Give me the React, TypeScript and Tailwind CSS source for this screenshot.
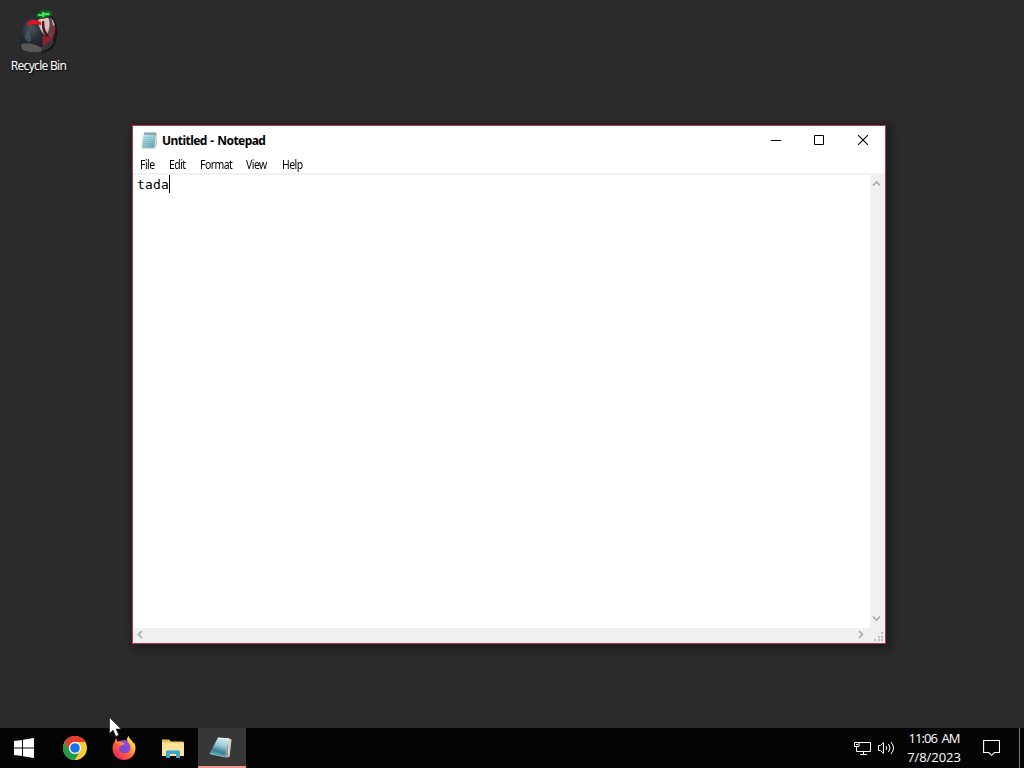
const MENU_ITEMS = [
  { title: 'File', className: 'w-[29px]' },
  { title: 'Edit', className: 'w-[31px]' },
  { title: 'Format', className: 'w-[46px]' },
  { title: 'View', className: 'w-[36px]' },
  { title: 'Help', className: 'w-[36px]' },
];

function RecycleBinIcon() {
  return (
    <svg width="40" height="46" viewBox="0 0 38 46" preserveAspectRatio="none">
      <defs>
        <radialGradient id="bin-shell" cx=".3" cy=".42" r=".8">
          <stop offset="0" stopColor="#4b565e" />
          <stop offset=".35" stopColor="#252d33" />
          <stop offset="1" stopColor="#0d1114" />
        </radialGradient>
        <linearGradient id="bin-light" x1="0" y1="0" x2="1" y2="1">
          <stop offset="0" stopColor="#efb7bf" />
          <stop offset=".5" stopColor="#dcc0c6" />
          <stop offset="1" stopColor="#5f4449" />
        </linearGradient>
        <filter id="bin-soft" x="-20%" y="-20%" width="140%" height="140%">
          <feGaussianBlur stdDeviation=".55" />
        </filter>
      </defs>
      <g filter="url(#bin-soft)">
        <path d="M16 4C9 8 2 17 1 30c0 6 1 10 4 12 8 4 21 4 26-1 4-5 6-14 5-22C35 11 30 5 22 3z" fill="url(#bin-shell)" />
        <path d="M18 12c5-3 12-3 14 0 4 7 3 15-3 19-6-4-10-9-11-19z" fill="url(#bin-light)" />
        <path d="M8 15c2-3 5-4 8-3l5 2v3l-7-1-6 2z" fill="#db1722" />
        <path d="M24 13c0 7 1 10 4 14l2 2-1 3c-5-4-8-10-7-19z" fill="#4a171d" />
        <path d="M30 9c4 9 2 15-1 20l-2-3c2-5 3-10 1-16z" fill="#5c3f46" />
        <path d="M34 17c1 10-2 17-8 23l-2-2c5-4 7-10 8-20z" fill="#852531" />
        <path d="M22 28l8 1-2 8-5 5z" fill="#8c202d" />
        <path d="M2 36c7-2 15 1 20 4l-1 4c-6 1-11 0-15-1-3-1-4-3-4-7" fill="#585858" />
        <path d="M8 22c3 3 4 8 3 12-3 0-5-2-6-5z" fill="#5d6b77" opacity=".5" />
        <path d="M22 38c5-2 9-5 10-9l1 6c-3 5-6 7-11 8z" fill="#343437" />
        <path d="M16 6l6-4 9 1 1 4-9 4-7-2z" fill="#145c20" />
        <path d="M18 7c4-1 8-1 11-1M23 4v5" stroke="#43e159" strokeWidth="2.3" />
      </g>
    </svg>
  );
}

function NotepadIcon() {
  return (
    <svg width="17" height="17" viewBox="0 0 17 17">
      <defs>
        <linearGradient id="pad-small" x1=".1" y1="0" x2=".8" y2="1">
          <stop offset="0" stopColor="#c5edf5" />
          <stop offset=".5" stopColor="#9bcfdb" />
          <stop offset="1" stopColor="#5da4b7" />
        </linearGradient>
      </defs>
      <path d="M3 1.5h13V13l-2 3.5H1z" fill="#b3b6ac" />
      <path d="M15 1.5l1 1-1 12-2 2z" fill="#e4dfc9" />
      <path d="M2.5 1.5h12.2l-1.4 14L.6 15z" fill="url(#pad-small)" />
      <path d="M3 5.5h10.5M2.6 7.5h10.5M2.3 9.5h10.5M2 11.5h10.5" stroke="#72aebb" strokeWidth=".5" />
      <path d="M4 .2V3M6 .2V3M8 .2V3M10 .2V3M12 .2V3M14 .2V3" stroke="#4c6970" strokeWidth=".9" />
    </svg>
  );
}

// the taskbar uses the wider, tilted notepad without rings
function NotepadTaskIcon() {
  return (
    <svg width="24" height="24" viewBox="0 0 24 24">
      <defs>
        <linearGradient id="pad-task" x1=".65" y1="0" x2=".35" y2="1">
          <stop offset="0" stopColor="#d7edf0" />
          <stop offset=".4" stopColor="#9bc9d4" />
          <stop offset=".7" stopColor="#3b7f94" />
          <stop offset="1" stopColor="#73b6c4" />
        </linearGradient>
      </defs>
      <path d="M18 3l4 1 .5 1-2 17-5 .5z" fill="#d4d1c5" />
      <path d="M9 2.5l11 .8-4 18.7-15.5-3.2z" fill="url(#pad-task)" />
      <path d="M9 3.3l11 .7" stroke="#e3eeec" />
      <path d="M19 8l-3 14 3-.5z" fill="#8d9796" />
      <path d="M1 18.7l14 3" stroke="#8fd3da" strokeWidth=".8" />
    </svg>
  );
}

function WindowsLogo() {
  return (
    <svg width="20" height="20" viewBox="0 0 20 20" fill="#fff">
      <path d="M0 3l8-1.1v7.6H0zM9 1.7L20 0v9.5H9zM0 10.5h8v7.6L0 17zM9 10.5h11V20L9 18.3z" />
    </svg>
  );
}

function ChromeIcon() {
  return (
    <svg width="24" height="24" viewBox="0 0 24 24">
      <circle cx="12" cy="12" r="12" fill="#fcc934" />
      <path d="M1.6 6A12 12 0 0 1 22.4 6H12a6 6 0 0 0-5.2 9z" fill="#e33b2e" />
      <path d="M1.6 6l5.2 9a6 6 0 0 0 10.4 0L12 24A12 12 0 0 1 1.6 6z" fill="#229b4b" />
      <path d="M17.2 15A6 6 0 0 0 17.2 9h-5L22.4 8A12 12 0 0 1 12 24z" fill="#fcc934" />
      <circle cx="12" cy="12" r="6" fill="#fff" />
      <circle cx="12" cy="12" r="4.8" fill="#1a73e8" />
    </svg>
  );
}

function FirefoxIcon() {
  return (
    <svg width="24" height="24" viewBox="0 0 24 24">
      <defs>
        <linearGradient id="fox-fire" x1=".9" y1=".05" x2=".15" y2=".9">
          <stop offset="0" stopColor="#fff44f" />
          <stop offset=".35" stopColor="#ffad35" />
          <stop offset=".62" stopColor="#ff603d" />
          <stop offset="1" stopColor="#e52462" />
        </linearGradient>
        <linearGradient id="fox-globe" x1="1" y1="0" x2="0" y2="1">
          <stop offset="0" stopColor="#a94ce8" />
          <stop offset="1" stopColor="#6543c5" />
        </linearGradient>
      </defs>
      <circle cx="12" cy="11.5" r="7.5" fill="url(#fox-globe)" />
      <path d="M2 7l2-5 1.5 3.5c1.5-.5 3-.3 4 .5l3 1.5c0 1-1.5 1.6-3 1.8-.5 1.2-2.5 1-2.5 3 0 3 3 5 6 5 4 0 6-3 5.5-7-.4-2.7-3-3.8-3.5-6.3-.3-1.7.7-3 1.7-4C17 3 20.5 4 21.3 7.5l.7-1c1 1.3 1.5 3.5 1.5 5.5 0 6.8-4.7 12-11.5 12S.5 18.8.5 12.5C.5 10.5 1 8.5 2 7z" fill="url(#fox-fire)" />
    </svg>
  );
}

function FolderIcon() {
  return (
    <svg width="22" height="19" viewBox="0 0 22 19">
      <path d="M0 .5h7l2 2h12.5V17H0z" fill="#edbd56" />
      <path d="M0 3.5h22V17H0z" fill="#ffe29a" />
      <path d="M4 19v-6.5l1.5-1.5h11l1.5 1.5V19h-4v-4H8v4z" fill="#43a5c3" />
      <path d="M5.2 11.5h11.6" stroke="#75c6d9" />
    </svg>
  );
}

function ScrollArrow({ d }: { d: string }) {
  return (
    <svg width="15" height="15" viewBox="0 0 15 15" fill="none" stroke="#a8a8a8" strokeWidth="1.6">
      <path d={d} />
    </svg>
  );
}

function Notepad() {
  return (
    <section className="absolute left-[132px] top-[125px] flex h-[519px] w-[754px] flex-col border border-[#b8354a] bg-white text-black shadow-[3px_3px_9px_3px_rgba(0,0,0,0.35)]">
      {/* TITLE BAR */}
      <header className="flex h-[28px] shrink-0 items-center pl-[8px]">
        <NotepadIcon />
        <h1 className="ml-[4px] whitespace-nowrap pt-px text-[12px] font-bold tracking-[-0.55px] [word-spacing:1px]">Untitled - Notepad</h1>
        <div className="ml-auto flex h-full shrink-0 pr-px">
          <button type="button" aria-label="Minimize" className="flex w-[43px] items-center justify-center">
            <svg width="10" height="10"><path d="M0 5.5h10" stroke="#000" /></svg>
          </button>
          <button type="button" aria-label="Maximize" className="flex w-[44px] items-center justify-center">
            <svg width="10" height="10"><path d="M.5.5h9v9h-9z" fill="none" stroke="#000" /></svg>
          </button>
          <button type="button" aria-label="Close" className="flex w-[43px] items-center justify-center">
            <svg width="10" height="10"><path d="M0 0l10 10M10 0L0 10" stroke="#000" strokeWidth="1.1" /></svg>
          </button>
        </div>
      </header>

      {/* MENU */}
      <nav className="flex h-[21px] shrink-0 items-center border-b-2 border-[#f1f1f1] pl-[7px] pt-[2px]">
        {MENU_ITEMS.map((item) => (
          <button key={item.title} type="button" className={`${item.className} whitespace-nowrap text-left text-[12px] leading-[18px] tracking-[-0.6px]`}>
            <span className="inline-block origin-left scale-x-[0.87]">{item.title}</span>
          </button>
        ))}
      </nav>

      {/* DOCUMENT */}
      <div className="flex min-h-0 flex-1">
        <div className="flex flex-1 pl-[4px] font-['DejaVu_Sans_Mono',monospace] text-[13px] leading-[20px]">
          <span className="tracking-[0.17px]">tada</span>
          <span className="h-[18px] w-px bg-black" />
        </div>
        <div className="flex w-[15px] flex-col justify-between bg-[#f0f0f0] pb-[2px] pt-px">
          <ScrollArrow d="M3 9.5l3.5-3.5 3.5 3.5" />
          <ScrollArrow d="M3 5.5l3.5 3.5 3.5-3.5" />
        </div>
      </div>
      <div className="flex h-[15px] shrink-0 items-start bg-[#f0f0f0]">
        <ScrollArrow d="M9 3l-3.5 3.5L9 10" />
        <div className="ml-auto">
          <ScrollArrow d="M4 3l3.5 3.5L4 10" />
        </div>
        <svg width="15" height="15" viewBox="0 0 15 15" fill="#bcbcbc">
          <path d="M11 4h2v2h-2zM8 8h2v2H8zM11 8h2v2h-2zM4 11h2v2H4zM8 11h2v2H8zM11 11h2v2h-2z" />
        </svg>
      </div>
    </section>
  );
}

function Taskbar() {
  return (
    <footer className="flex h-10 shrink-0 items-center bg-[#050505] text-white">
      <button type="button" aria-label="Start" className="flex w-[48px] justify-center"><WindowsLogo /></button>
      <button type="button" aria-label="Chrome" className="ml-[2px] flex w-[49px] justify-center"><ChromeIcon /></button>
      <button type="button" aria-label="Firefox" className="flex w-[49px] justify-center"><FirefoxIcon /></button>
      <button type="button" aria-label="Files" className="flex w-[50px] justify-center"><FolderIcon /></button>
      <button type="button" aria-label="Notepad" className="flex h-10 w-[48px] items-center justify-center border-b-2 border-[#ee9790] bg-[#373737] pr-[2px]"><NotepadTaskIcon /></button>

      {/* TRAY */}
      <div className="ml-auto flex h-full items-center">
        <svg width="17" height="15" viewBox="0 0 17 15" fill="none" stroke="#fff">
          <path d="M5 1.5h11.5v9h-14V5.5M.5 1.5H5v4H.5zM9.5 11v2.5M6 13.5h7" />
          <path d="M2 3h2v1H2z" fill="#fff" stroke="none" />
        </svg>
        <svg width="17" height="14" viewBox="0 0 17 14" fill="none" stroke="#fff" className="ml-[7px]">
          <path d="M.5 4.5h2l3-3v11l-3-3h-2z" />
          <path d="M8 5q1.5 2 0 4M10.5 3q3 4 0 8M13 1q5 6 0 12" />
        </svg>
        <time className="ml-[12px] flex w-[54px] flex-col items-center whitespace-nowrap pb-px font-['Open_Sans',sans-serif] text-[13px] font-medium leading-[19px]">
          <span className="tracking-[-0.95px] [word-spacing:2px]">11:06 AM</span>
          <span className="tracking-[-0.05px]">7/8/2023</span>
        </time>
        <svg width="17" height="17" viewBox="0 0 17 17" fill="none" stroke="#fff" strokeWidth="1.1" className="ml-[22px]">
          <path d="M.6.5h15.9v12h-5.1l-2.8 2.8-2.8-2.8H.6z" />
        </svg>
        <div className="ml-[19px] h-full w-[5px] border-l border-[#777]" />
      </div>
    </footer>
  );
}

export default function App() {
  return (
    <main className="relative flex h-[768px] w-[1024px] flex-col overflow-hidden bg-[#2b2b2b] font-['Noto_Sans',sans-serif]">
      <div className="flex-1">
        <div className="flex w-[77px] flex-col items-center pt-[8px] text-[12px] leading-[18px] text-white">
          <RecycleBinIcon />
          <span className="mt-[3px] whitespace-nowrap tracking-[-0.7px] [text-shadow:1px_1px_2px_#000]">Recycle Bin</span>
        </div>
      </div>
      <Taskbar />
      <Notepad />
      <svg className="absolute left-[109px] top-[717px]" width="13" height="21" viewBox="0 0 13 21">
        <path d="M.5.5v16l3.6-3.3 2.7 6.2 3-1.3-2.7-6h5z" fill="#fff" stroke="#222" strokeWidth=".7" />
      </svg>
    </main>
  );
}
